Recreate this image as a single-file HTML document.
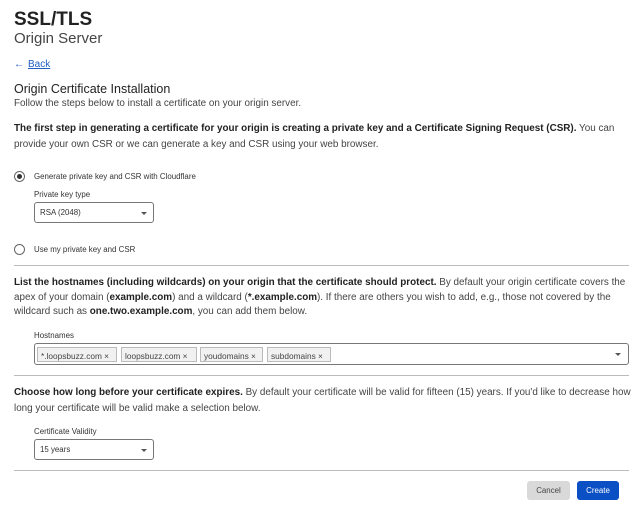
<!DOCTYPE html>
<html><head><meta charset="utf-8"><style>
*{box-sizing:border-box;margin:0;padding:0}
body{width:642px;height:516px;background:#fff;font-family:"Liberation Sans",sans-serif;color:#333;position:relative;overflow:hidden}
.a{position:absolute;white-space:nowrap}
h1{position:absolute;left:14px;top:9px;font-size:19px;font-weight:bold;color:#222}
.sub{left:14px;top:30px;font-size:15px;color:#444}
.back{left:14px;top:59px;font-size:10px;color:#1f5fc4}
.back u{margin-left:4px}
.t{left:14px;top:82px;font-size:12.5px;color:#222}
.p{font-size:9.9px;color:#444}
.p b{color:#222}
.hr{position:absolute;left:14px;width:615px;height:1px;background:#bbb}
.radio{position:absolute;width:11px;height:11px;border:1px solid #666;border-radius:50%}
.radio.on::after{content:"";position:absolute;left:2px;top:2px;width:5px;height:5px;border-radius:50%;background:#333}
.sm{font-size:7.9px;color:#333}
.sel{position:absolute;border:1px solid #777;border-radius:3px;background:#fff}
.sel span{position:absolute;left:5px;top:5px;font-size:7.9px;color:#333}
.car{position:absolute;width:0;height:0;border-left:3px solid transparent;border-right:3px solid transparent;border-top:3px solid #555}
.tag{position:absolute;top:3px;height:15px;border:1px solid #bbb;background:#f1f1f1;font-size:8.3px;color:#444;padding:3px 0 0 3px;white-space:nowrap;overflow:hidden}
.btn{position:absolute;top:481px;height:19px;border-radius:3px;font-size:7.9px;text-align:center;line-height:19px}
</style></head><body>
<h1>SSL/TLS</h1>
<div class="a sub">Origin Server</div>
<div class="a back">&#8592;<u>Back</u></div>
<div class="a t">Origin Certificate Installation</div>
<div class="a p" style="left:14px;top:98px">Follow the steps below to install a certificate on your origin server.</div>
<div class="a p" style="left:14px;top:121px;line-height:16px"><b>The first step in generating a certificate for your origin is creating a private key and a Certificate Signing Request (CSR).</b> You can<br>provide your own CSR or we can generate a key and CSR using your web browser.</div>
<div class="radio on" style="left:14px;top:171px"></div>
<div class="a sm" style="left:34px;top:172px">Generate private key and CSR with Cloudflare</div>
<div class="a sm" style="left:34px;top:190px">Private key type</div>
<div class="sel" style="left:34px;top:202px;width:120px;height:21px"><span>RSA (2048)</span><div class="car" style="left:106px;top:9px"></div></div>
<div class="radio" style="left:14px;top:244px"></div>
<div class="a sm" style="left:34px;top:245px">Use my private key and CSR</div>
<div class="hr" style="top:265px"></div>
<div class="a p" style="left:14px;top:276px;line-height:14.5px"><b>List the hostnames (including wildcards) on your origin that the certificate should protect.</b> By default your origin certificate covers the<br>apex of your domain (<b>example.com</b>) and a wildcard (<b>*.example.com</b>). If there are others you wish to add, e.g., those not covered by the<br>wildcard such as <b>one.two.example.com</b>, you can add them below.</div>
<div class="a sm" style="left:34px;top:331px">Hostnames</div>
<div class="sel" style="left:34px;top:343px;width:595px;height:22px">
<div class="tag" style="left:2px;width:80px">*.loopsbuzz.com ×</div>
<div class="tag" style="left:86px;width:76px">loopsbuzz.com ×</div>
<div class="tag" style="left:165px;width:63px">youdomains ×</div>
<div class="tag" style="left:232px;width:64px">subdomains ×</div>
<div class="car" style="left:580px;top:9px"></div></div>
<div class="hr" style="top:375px"></div>
<div class="a p" style="left:14px;top:385px;line-height:16px"><b>Choose how long before your certificate expires.</b> By default your certificate will be valid for fifteen (15) years. If you'd like to decrease how<br>long your certificate will be valid make a selection below.</div>
<div class="a sm" style="left:34px;top:427px">Certificate Validity</div>
<div class="sel" style="left:34px;top:439px;width:120px;height:21px"><span>15 years</span><div class="car" style="left:106px;top:9px"></div></div>
<div class="hr" style="top:470px"></div>
<div class="btn" style="left:527px;width:43px;background:#d9d9d9;color:#444">Cancel</div>
<div class="btn" style="left:577px;width:42px;background:#0a4fc4;color:#fff">Create</div>
</body></html>
